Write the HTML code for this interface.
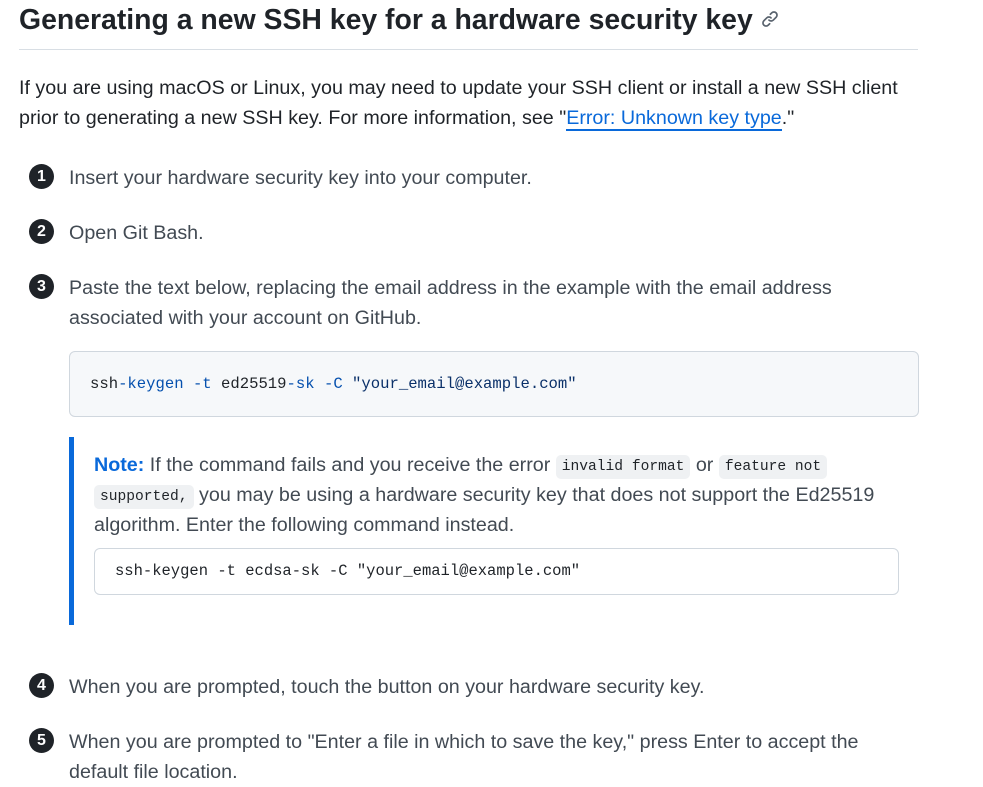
<!DOCTYPE html>
<html><head><meta charset="utf-8"><style>
body{margin:0;background:#fff;font-family:"Liberation Sans",sans-serif;color:#1f2328;}
.a{position:absolute;white-space:nowrap;}
h1{position:absolute;left:19px;top:4px;margin:0;font-size:28.4px;font-weight:bold;white-space:nowrap;color:#1f2328;}
.rule{position:absolute;left:19px;top:49px;width:899px;height:1px;background:#d8dee4;}
.p{font-size:19.7px;line-height:30px;color:#1f2328;}
.li{font-size:19.7px;line-height:30px;color:#424a53;left:69px;}
.n{position:absolute;left:29px;width:25px;height:25px;border-radius:50%;background:#1f2328;color:#fff;font-weight:bold;font-size:16px;text-align:center;line-height:25px;}
a{color:#0969da;text-decoration:none;border-bottom:2px solid #0969da;}
.code{position:absolute;left:69px;top:351px;width:848px;height:64px;background:#f6f8fa;border:1px solid #d0d7de;border-radius:6px;}
.mono{font-family:"Liberation Mono",monospace;font-size:15.6px;}
.bl{position:absolute;left:69px;top:437px;width:5px;height:188px;background:#0969da;}
.ic{font-family:"Liberation Mono",monospace;font-size:14.6px;background:#eff1f3;border-radius:5px;padding:0 6px;display:inline-block;line-height:24px;color:#1f2328;vertical-align:1px;}
.code2{position:absolute;left:94px;top:548px;width:803px;height:45px;background:#fff;border:1px solid #d0d7de;border-radius:6px;}
</style></head><body>
<h1>Generating a new SSH key for a hardware security key <svg width="18" height="18" viewBox="0 0 16 16" style="vertical-align:1px"><path fill="#59636e" d="m7.775 3.275 1.25-1.25a3.5 3.5 0 1 1 4.950 4.95l-2.5 2.5a3.5 3.5 0 0 1-4.95 0 .751.751 0 0 1 .018-1.042.751.751 0 0 1 1.042-.018 1.998 1.998 0 0 0 2.83 0l2.5-2.5a2.002 2.002 0 0 0-2.83-2.830l-1.25 1.25a.751.751 0 0 1-1.042-.018.751.751 0 0 1-.018-1.042Zm-4.69 9.64a1.998 1.998 0 0 0 2.83 0l1.25-1.250a.751.751 0 0 1 1.042.018.751.751 0 0 1 .018 1.042l-1.25 1.25a3.5 3.5 0 1 1-4.95-4.95l2.5-2.5a3.5 3.5 0 0 1 4.95 0 .751.751 0 0 1-.018 1.042.751.751 0 0 1-1.042.018 1.998 1.998 0 0 0-2.83 0l-2.5 2.5a1.998 1.998 0 0 0 0 2.83Z"/></svg></h1>
<div class="rule"></div>
<div class="a p" style="left:19px;top:73px">If you are using macOS or Linux, you may need to update your SSH client or install a new SSH client<br>prior to generating a new SSH key. For more information, see "<a>Error: Unknown key type</a>."</div>

<div class="n" style="top:164px">1</div>
<div class="a li" style="top:163px">Insert your hardware security key into your computer.</div>
<div class="n" style="top:219px">2</div>
<div class="a li" style="top:218px">Open Git Bash.</div>
<div class="n" style="top:274px">3</div>
<div class="a li" style="top:273px">Paste the text below, replacing the email address in the example with the email address<br>associated with your account on GitHub.</div>

<div class="code"></div>
<div class="a mono" style="left:90px;top:375px;color:#1f2328">ssh<span style="color:#0550ae">-keygen -t</span> ed25519<span style="color:#0550ae">-sk -C</span> <span style="color:#0a3069">"your_email@example.com"</span></div>

<div class="bl"></div>
<div class="a li" style="left:94px;top:450px;line-height:30px">
<span style="color:#0969da;font-weight:bold">Note:</span> If the command fails and you receive the error <span class="ic">invalid format</span> or <span class="ic">feature not</span><br><span class="ic">supported,</span> you may be using a hardware security key that does not support the Ed25519<br>algorithm. Enter the following command instead.</div>
<div class="code2"></div>
<div class="a mono" style="left:115px;top:562px;font-size:15.5px">ssh-keygen -t ecdsa-sk -C "your_email@example.com"</div>

<div class="n" style="top:673px">4</div>
<div class="a li" style="top:672px">When you are prompted, touch the button on your hardware security key.</div>
<div class="n" style="top:728px">5</div>
<div class="a li" style="top:727px">When you are prompted to "Enter a file in which to save the key," press Enter to accept the<br>default file location.</div>
</body></html>
